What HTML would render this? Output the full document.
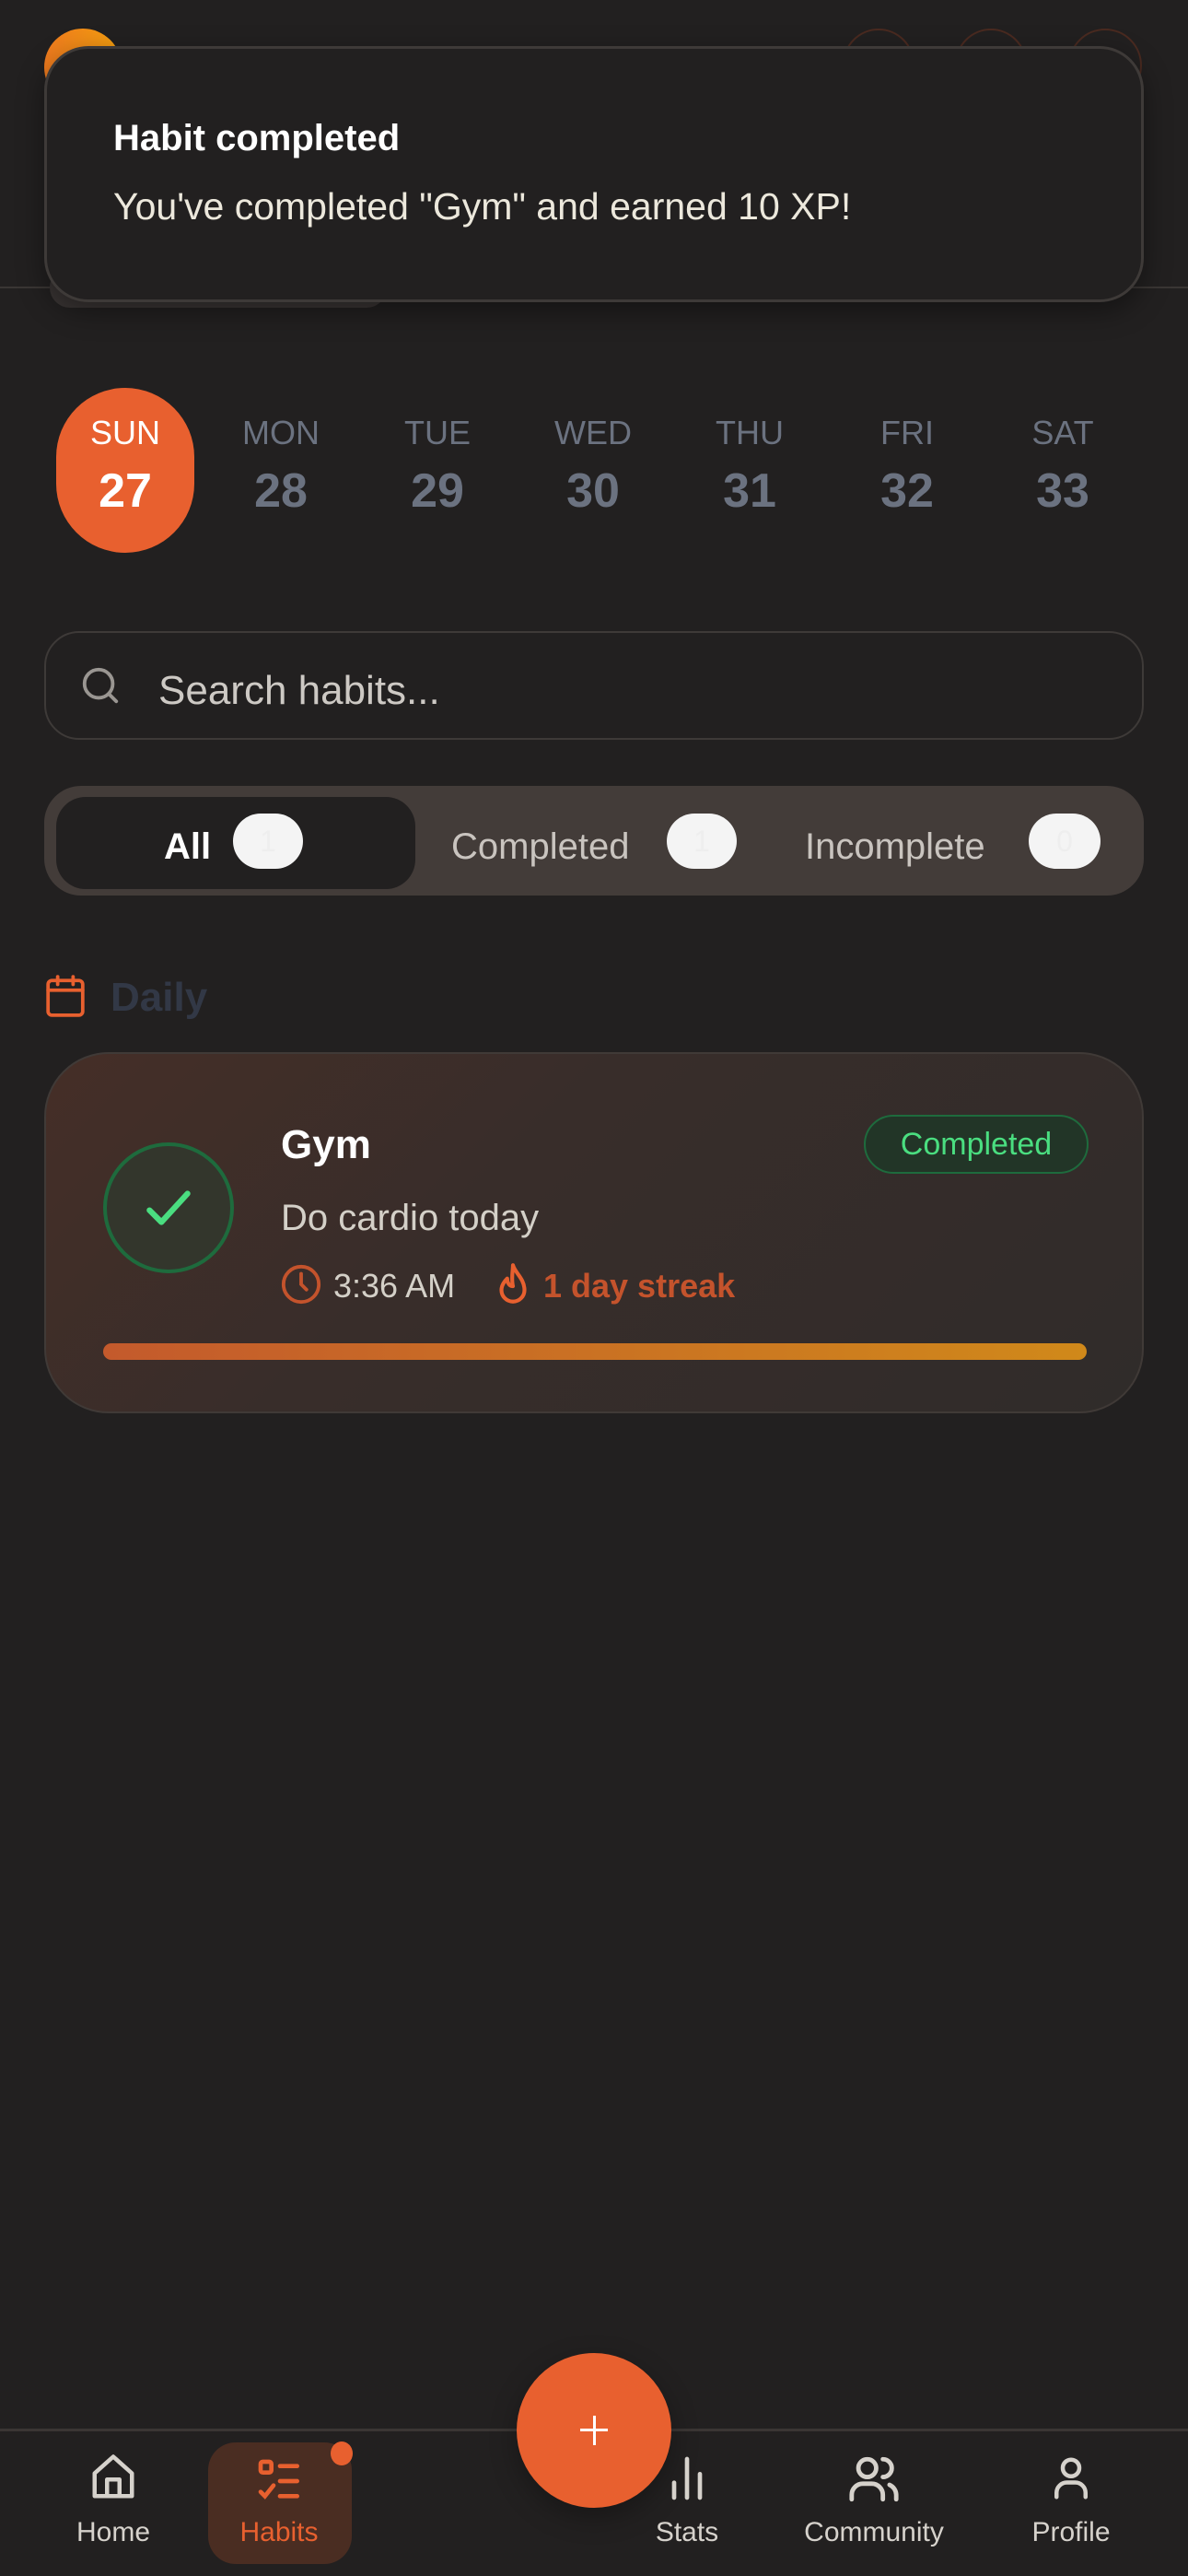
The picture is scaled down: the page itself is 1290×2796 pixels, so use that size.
<!DOCTYPE html>
<html><head><meta charset="utf-8">
<style>
*{margin:0;padding:0;box-sizing:border-box}
body{width:1290px;height:2796px;background:#222020;font-family:"Liberation Sans",sans-serif;position:relative;overflow:hidden;color:#fff}
.abs{position:absolute}
.day{position:absolute;width:150px;text-align:center;top:421px;height:179px}
.day .l{position:absolute;top:28px;width:100%;font-size:36px;color:#6b7280}
.day .n{position:absolute;top:82px;width:100%;font-size:52px;font-weight:bold;color:#6b7280}
.badge{position:absolute;top:30px;height:60px;width:76px;border-radius:30px;background:#f4f4f4;color:#eee;font-size:32px;text-align:center;line-height:60px}
.ft{position:absolute;top:7px;line-height:119px;font-size:40px;color:#c9c4bf}
.nav{position:absolute;top:2732px;font-size:30px;color:#d6d2cc;transform:translateX(-50%)}
</style></head><body>
<div class="abs" style="left:48px;top:31px;width:84px;height:84px;border-radius:50%;background:linear-gradient(90deg,#ee7a1e,#f5a00f)"></div>
<div class="abs" style="left:915px;top:31px;width:78px;height:78px;border-radius:50%;border:2px solid #4a2a20"></div>
<div class="abs" style="left:1037px;top:31px;width:78px;height:78px;border-radius:50%;border:2px solid #4a2a20"></div>
<div class="abs" style="left:1160px;top:31px;width:80px;height:80px;border-radius:50%;border:2px solid #4a2a20"></div>
<div class="abs" style="left:0;top:311px;width:1290px;height:2px;background:#3a3634"></div>
<div class="abs" style="left:54px;top:290px;width:366px;height:44px;border-radius:22px;background:#3a3534"></div>
<div class="abs" style="left:48px;top:50px;width:1194px;height:278px;border-radius:48px;background:#222020;border:3px solid #3e3a38;box-shadow:0 10px 30px rgba(0,0,0,.4)">
<div class="abs" style="left:72px;top:75px;font-size:40px;font-weight:bold;color:#fff">Habit completed</div>
<div class="abs" style="left:72px;top:148px;font-size:41px;color:#ece8dc">You've completed "Gym" and earned 10 XP!</div>
</div>
<div class="abs" style="left:61px;top:421px;width:150px;height:179px;border-radius:75px;background:#e8602f"></div>
<div class="day" style="left:61px"><div class="l" style="color:#fff">SUN</div><div class="n" style="color:#fff">27</div></div>
<div class="day" style="left:230px"><div class="l">MON</div><div class="n">28</div></div>
<div class="day" style="left:400px"><div class="l">TUE</div><div class="n">29</div></div>
<div class="day" style="left:569px"><div class="l">WED</div><div class="n">30</div></div>
<div class="day" style="left:739px"><div class="l">THU</div><div class="n">31</div></div>
<div class="day" style="left:910px"><div class="l">FRI</div><div class="n">32</div></div>
<div class="day" style="left:1079px"><div class="l">SAT</div><div class="n">33</div></div>
<div class="abs" style="left:48px;top:685px;width:1194px;height:118px;border-radius:38px;border:2px solid #3e3a38">
<svg class="abs" style="left:36px;top:34px" width="46" height="46" viewBox="0 0 24 24" fill="none" stroke="#9a9692" stroke-width="2" stroke-linecap="round"><circle cx="11" cy="11" r="8"/><path d="M21 21l-4.3-4.3"/></svg>
<div class="abs" style="left:122px;top:38px;font-size:44px;color:#cdc9c4">Search habits...</div>
</div>
<div class="abs" style="left:48px;top:853px;width:1194px;height:119px;border-radius:40px;background:#433c39">
<div class="abs" style="left:13px;top:12px;width:390px;height:100px;border-radius:32px;background:#222020"></div>
<div class="ft" style="left:130px;color:#fff;font-weight:bold">All</div>
<div class="badge" style="left:205px">1</div>
<div class="ft" style="left:442px">Completed</div>
<div class="badge" style="left:676px">1</div>
<div class="ft" style="left:826px">Incomplete</div>
<div class="badge" style="left:1069px;width:78px">0</div>
</div>
<svg class="abs" style="left:50px;top:1058px" width="42" height="46" viewBox="0 0 20 22" fill="none" stroke="#e8602f" stroke-width="1.8" stroke-linecap="round"><rect x="1" y="3" width="18" height="18" rx="2"/><path d="M1 8h18M6 1v4M14 1v4"/></svg>
<div class="abs" style="left:120px;top:1058px;font-size:44px;font-weight:bold;color:#323846">Daily</div>
<div class="abs" style="left:48px;top:1142px;width:1194px;height:392px;border-radius:70px;background:linear-gradient(135deg,#452e27 0%,#382d2a 40%,#302c2a 100%);border:2px solid #403a37">
<div class="abs" style="left:62px;top:96px;width:142px;height:142px;border-radius:50%;border:4px solid #1e6b3d;background:#33362c"></div>
<svg class="abs" style="left:102px;top:136px" width="62" height="62" viewBox="0 0 24 24" fill="none" stroke="#4ade80" stroke-width="2.4" stroke-linecap="round" stroke-linejoin="round"><path d="M4 13l5 5L20 6"/></svg>
<div class="abs" style="left:255px;top:74px;font-size:44px;font-weight:bold;color:#fff">Gym</div>
<div class="abs" style="left:888px;top:66px;width:244px;height:64px;border-radius:32px;border:2px solid #1e6b3d;background:#223527;color:#4ade80;font-size:34px;text-align:center;line-height:60px">Completed</div>
<div class="abs" style="left:255px;top:156px;font-size:40px;color:#d4d0c8">Do cardio today</div>
<svg class="abs" style="left:254px;top:227px" width="46" height="46" viewBox="0 0 24 24" fill="none" stroke="#c4532c" stroke-width="2" stroke-linecap="round"><circle cx="12" cy="12" r="10"/><path d="M12 6v6l3 3"/></svg>
<div class="abs" style="left:312px;top:231px;font-size:36px;color:#d4d0c8">3:36 AM</div>
<svg class="abs" style="left:486px;top:225px" width="42" height="50" viewBox="0 0 20 24" fill="none" stroke="#e8602f" stroke-width="2" stroke-linejoin="round"><path d="M10 2c1 4 6 7 6 13a6 6 0 0 1-12 0c0-3 2-5 3-6 0 2 1 4 3 4-1-4 0-8 0-11z"/></svg>
<div class="abs" style="left:540px;top:231px;font-size:36px;font-weight:bold;color:#c4532c">1 day streak</div>
<div class="abs" style="left:62px;top:314px;width:1068px;height:18px;border-radius:9px;background:linear-gradient(90deg,#c45a2c,#d0891a)"></div>
</div>
<div class="abs" style="left:0;top:2636px;width:1290px;height:3px;background:#3a3634"></div>
<div class="abs" style="left:226px;top:2651px;width:156px;height:132px;border-radius:30px;background:#4a2d22"></div>
<div class="abs" style="left:359px;top:2650px;width:24px;height:26px;border-radius:50%;background:#e8602f"></div>
<div class="abs" style="left:561px;top:2554px;width:168px;height:168px;border-radius:50%;background:#e8602f;box-shadow:0 10px 30px rgba(0,0,0,.3)"></div>
<div class="abs" style="left:630px;top:2636px;width:30px;height:3px;background:#fff"></div>
<div class="abs" style="left:644px;top:2622px;width:3px;height:32px;background:#fff"></div>
<svg class="abs" style="left:96px;top:2662px" width="54" height="54" viewBox="0 0 24 24" fill="none" stroke="#d6d2cc" stroke-width="2" stroke-linejoin="round"><path d="M3 10l9-8 9 8v11H3z"/><path d="M9 21v-8h6v8"/></svg>
<svg class="abs" style="left:276px;top:2665px" width="56" height="56" viewBox="0 0 24 24" fill="none" stroke="#e8602f" stroke-width="2" stroke-linecap="round"><rect x="3" y="3" width="5" height="5" rx="1"/><path d="M3 17l2 2 4-5M12 5h8M12 12h8M12 19h8"/></svg>
<svg class="abs" style="left:718px;top:2662px" width="56" height="56" viewBox="0 0 24 24" fill="none" stroke="#d6d2cc" stroke-width="2" stroke-linecap="round"><path d="M6 21V14M12 21V3M18 21V10"/></svg>
<svg class="abs" style="left:920px;top:2662px" width="58" height="58" viewBox="0 0 24 24" fill="none" stroke="#d6d2cc" stroke-width="2" stroke-linecap="round"><circle cx="9" cy="7" r="4"/><path d="M2 21v-2a5 5 0 0 1 5-5h4a5 5 0 0 1 5 5v2M16 3a4 4 0 0 1 0 8M22 21v-2a5 5 0 0 0-3-4.5"/></svg>
<svg class="abs" style="left:1136px;top:2662px" width="54" height="56" viewBox="0 0 24 24" fill="none" stroke="#d6d2cc" stroke-width="2" stroke-linecap="round"><circle cx="12" cy="7" r="4"/><path d="M5 21v-2a5 5 0 0 1 5-5h4a5 5 0 0 1 5 5v2"/></svg>
<div class="nav" style="left:123px">Home</div>
<div class="nav" style="left:303px;color:#e8602f">Habits</div>
<div class="nav" style="left:746px">Stats</div>
<div class="nav" style="left:949px">Community</div>
<div class="nav" style="left:1163px">Profile</div>
</body></html>
